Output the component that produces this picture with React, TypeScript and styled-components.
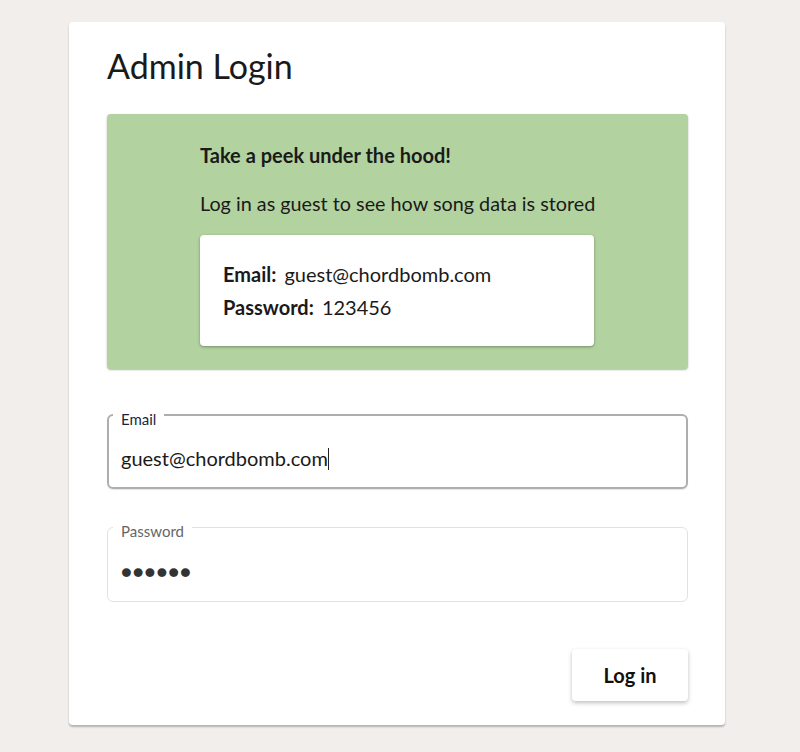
import React from "react";
import styled, { createGlobalStyle } from "styled-components";

const Global = createGlobalStyle`
  html, body { margin: 0; padding: 0; background: #f1eeec; }
  body { font-family: Lato, "Open Sans", sans-serif; color: #1a1a1a; }
  * { box-sizing: border-box; }
`;

const Page = styled.div`
  padding: 22px 75px 26px 69px;
  min-height: 752px;
`;

const Card = styled.div`
  background: #fff;
  border-radius: 4px;
  box-shadow: 0 2px 2px rgba(0, 0, 0, 0.25);
  padding: 24px 37px 24px 38px;
  display: flex;
  flex-direction: column;
`;

const Title = styled.h1`
  margin: 0;
  font-size: 34px;
  font-weight: 400;
  line-height: 40px;
  color: #1a1a1a;
`;

const Hint = styled.div`
  margin-top: 28px;
  background: #b2d39f;
  border-radius: 4px;
  box-shadow: 0 1px 2px rgba(0, 0, 0, 0.3);
  padding: 29px 20px 23px 93px;
`;

const HintHead = styled.div`
  font-weight: 700;
  font-size: 20px;
  line-height: 24px;
`;

const HintText = styled.div`
  margin-top: 24px;
  font-size: 19.8px;
  line-height: 24px;
`;

const CredBox = styled.div`
  margin-top: 20px;
  width: 394px;
  background: #fff;
  border-radius: 4px;
  box-shadow: 0 1px 3px rgba(0, 0, 0, 0.35);
  padding: 27px 23px 27px 23px;
  display: flex;
  flex-direction: column;
  gap: 9px;
`;

const CredRow = styled.div`
  font-size: 20px;
  line-height: 24px;
  b { font-weight: 700; margin-right: 8px; }
`;

const Field = styled.fieldset<{ $focused?: boolean }>`
  margin: ${(p) => (p.$focused ? "34px 0 0" : "26px 0 0")};
  padding: ${(p) => (p.$focused ? "0 12px 17px 12px" : "0 13px 18px 13px")};
  border: ${(p) => (p.$focused ? "2px solid #aeaeae" : "1px solid #e2e2e2")};
  border-radius: 6px;
  ${(p) => (p.$focused ? "box-shadow: 0 1px 1px rgba(0,0,0,0.1);" : "")}
  legend {
    padding: 8px 8px 0 8px;
    margin-left: -8px;
    font-size: 15px;
    line-height: 16px;
    color: ${(p) => (p.$focused ? "#1b1f44" : "#666")};
  }
`;

const Input = styled.div`
  font-size: 20px;
  line-height: 24px;
  color: #1a1a1a;
  margin-top: 19px;
`;

const Dots = styled.div`
  margin-top: 20px;
  font-size: 18px;
  line-height: 24px;
  letter-spacing: 1px;
  color: #333;
`;

const Caret = styled.span`
  display: inline-block;
  width: 1px;
  height: 22px;
  background: #222;
  vertical-align: -4px;
`;

const Actions = styled.div`
  display: flex;
  justify-content: flex-end;
  margin-top: 47px;
`;

const Button = styled.button`
  width: 116px;
  height: 52px;
  border: none;
  background: #fff;
  border-radius: 4px;
  box-shadow: 0 2px 4px rgba(0, 0, 0, 0.25);
  font-family: Lato, sans-serif;
  font-weight: 700;
  font-size: 20px;
  color: #111;
`;

export default function App() {
  return (
    <>
      <Global />
      <Page>
        <Card>
          <Title>Admin Login</Title>
          <Hint>
            <HintHead>Take a peek under the hood!</HintHead>
            <HintText>Log in as guest to see how song data is stored</HintText>
            <CredBox>
              <CredRow>
                <b>Email:</b>guest@chordbomb.com
              </CredRow>
              <CredRow>
                <b>Password:</b>123456
              </CredRow>
            </CredBox>
          </Hint>
          <Field $focused>
            <legend>Email</legend>
            <Input>
              guest@chordbomb.com<Caret />
            </Input>
          </Field>
          <Field>
            <legend>Password</legend>
            <Dots>●●●●●●</Dots>
          </Field>
          <Actions>
            <Button>Log in</Button>
          </Actions>
        </Card>
      </Page>
    </>
  );
}
